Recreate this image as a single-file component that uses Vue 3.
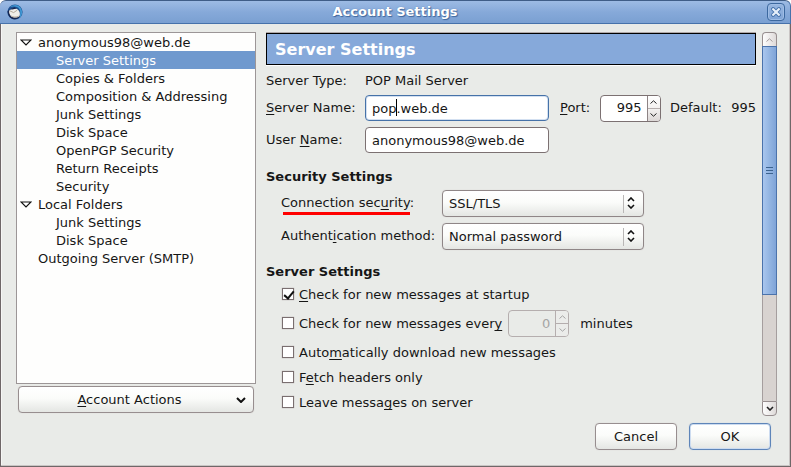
<script setup>
import { ref } from 'vue'

const tree = [
  {
    label: 'anonymous98@web.de',
    children: [
      'Server Settings',
      'Copies & Folders',
      'Composition & Addressing',
      'Junk Settings',
      'Disk Space',
      'OpenPGP Security',
      'Return Receipts',
      'Security'
    ]
  },
  { label: 'Local Folders', children: ['Junk Settings', 'Disk Space'] },
  { label: 'Outgoing Server (SMTP)', children: [] }
]
const selected = ref('0-0')

const serverName = ref('pop.web.de')
const userName = ref('anonymous98@web.de')
const port = ref(995)
const security = ref('SSL/TLS')
const auth = ref('Normal password')
const interval = ref(0)
const atStartup = ref(true)
const periodic = ref(false)
const autoDownload = ref(false)
const headersOnly = ref(false)
const leaveOnServer = ref(false)
</script>

<template>
  <div class="window">
    <header class="titlebar">
      <svg class="app-icon" viewBox="0 0 16 16" width="16" height="16" aria-hidden="true">
        <circle cx="8" cy="8" r="7.6" fill="#1d4f8f" />
        <path d="M3 3.2 C5.5 .4 11 0 13.5 3.5 C16 7 15.5 12 12 14.5 C13.6 11 14 6 11 3.6 C8 2 5 2.6 3 3.2Z" fill="#3f97d3" />
        <path d="M.6 7 C.6 11 3 14.6 7 15.3 C10 15.6 12.4 14 13 12 L5 12 L2 6Z" fill="#16254f" />
        <path d="M2.2 6.8 C4 4.6 7.6 3.6 10 5 C12.8 6.8 13.6 10.2 12.2 12.4 C10 14 5.6 13.8 3.8 12 C2.6 10.6 1.8 8.6 2.2 6.8Z" fill="#efede8" />
        <path d="M2.8 6.8 L6.6 8.6 L10.2 6.2 M4 12 C6 13.4 9.6 13.4 11.8 12.2" fill="none" stroke="#b5ab9c" stroke-width="1" />
        <path d="M3 5.2 L7.6 3.2 L9.6 4.6 L5.4 5.6Z" fill="#16254f" />
      </svg>
      <h1 class="title">Account Settings</h1>
      <button class="close" type="button" aria-label="Close">
        <svg viewBox="0 0 10 10" width="10" height="10" aria-hidden="true">
          <path d="M2.2 2.2 L7.8 7.8 M7.8 2.2 L2.2 7.8" stroke="#4672ab" stroke-width="4" stroke-linecap="square" />
          <path d="M2.2 2.2 L7.8 7.8 M7.8 2.2 L2.2 7.8" stroke="#e6effa" stroke-width="2.2" stroke-linecap="square" />
        </svg>
      </button>
    </header>

    <div class="body">
      <div class="columns">
        <aside class="sidebar">
          <ul class="tree" role="tree">
            <li v-for="(node, i) in tree" :key="i" role="treeitem">
              <div class="row branch">
                <span class="twisty">
                  <svg v-if="node.children.length" viewBox="0 0 12 7" width="12" height="7" aria-hidden="true">
                    <path d="M1 1 H11 L6 6Z" fill="#fff" stroke="#111" stroke-width="1.2" />
                  </svg>
                </span>
                {{ node.label }}
              </div>
              <ul v-if="node.children.length" role="group">
                <li
                  v-for="(child, j) in node.children"
                  :key="j"
                  class="row leaf"
                  :class="{ selected: selected === i + '-' + j }"
                  role="treeitem"
                  @click="selected = i + '-' + j"
                >{{ child }}</li>
              </ul>
            </li>
          </ul>
          <button class="btn actions" type="button">
            <span class="actions-label"><u>A</u>ccount Actions</span>
            <svg viewBox="0 0 10 6" width="10" height="6" aria-hidden="true">
              <path d="M1 1 L5 5 L9 1" fill="none" stroke="#111" stroke-width="2" />
            </svg>
          </button>
        </aside>

        <main class="pane">
          <h2 class="banner">Server Settings</h2>

          <div class="server">
            <div class="line type">
              <span class="name">Server Type:</span>
              <span>POP Mail Server</span>
            </div>
            <div class="line">
              <label class="name" for="server"><u>S</u>erver Name:</label>
              <span class="field">
                <input id="server" v-model="serverName" class="text active" type="text" />
                <span class="caret"></span>
              </span>
              <div class="port">
                <label for="port"><u>P</u>ort:</label>
                <span class="spin">
                  <input id="port" v-model="port" type="text" inputmode="numeric" />
                  <span class="steps">
                    <button type="button" aria-label="Increase port" @click="port++">
                      <svg viewBox="0 0 7 4" width="7" height="4"><path d="M.5 3.5 L3.5 .8 L6.5 3.5" /></svg>
                    </button>
                    <button type="button" aria-label="Decrease port" @click="port--">
                      <svg viewBox="0 0 7 4" width="7" height="4"><path d="M.5 .5 L3.5 3.2 L6.5 .5" /></svg>
                    </button>
                  </span>
                </span>
                <span>Default:</span>
                <span>995</span>
              </div>
            </div>
            <div class="line">
              <label class="name" for="user">User <u>N</u>ame:</label>
              <span class="field">
                <input id="user" v-model="userName" class="text" type="text" />
              </span>
            </div>
          </div>

          <h3>Security Settings</h3>
          <div class="group">
            <div class="line">
              <label class="choice marked" for="security">Connection sec<u>u</u>rity:</label>
              <span class="select">
                <select id="security" v-model="security">
                  <option>SSL/TLS</option>
                </select>
                <svg viewBox="0 0 8 12" width="8" height="12" aria-hidden="true">
                  <path d="M1 4 L4 1 L7 4 M1 8 L4 11 L7 8" />
                </svg>
              </span>
            </div>
            <div class="line">
              <label class="choice" for="auth">Authent<u>i</u>cation method:</label>
              <span class="select">
                <select id="auth" v-model="auth">
                  <option>Normal password</option>
                </select>
                <svg viewBox="0 0 8 12" width="8" height="12" aria-hidden="true">
                  <path d="M1 4 L4 1 L7 4 M1 8 L4 11 L7 8" />
                </svg>
              </span>
            </div>
          </div>

          <h3>Server Settings</h3>
          <div class="group">
            <label class="check"><input v-model="atStartup" type="checkbox" /><span><u>C</u>heck for new messages at startup</span></label>
            <div class="line every">
              <label class="check"><input v-model="periodic" type="checkbox" /><span>Check for new messages ever<u>y</u></span></label>
              <span class="spin off">
                <input v-model="interval" type="text" aria-label="Minutes between checks" disabled />
                <span class="steps">
                  <button type="button" aria-label="Increase minutes" disabled>
                    <svg viewBox="0 0 7 4" width="7" height="4"><path d="M.5 3.5 L3.5 .8 L6.5 3.5" /></svg>
                  </button>
                  <button type="button" aria-label="Decrease minutes" disabled>
                    <svg viewBox="0 0 7 4" width="7" height="4"><path d="M.5 .5 L3.5 3.2 L6.5 .5" /></svg>
                  </button>
                </span>
              </span>
              <span class="unit">minutes</span>
            </div>
            <label class="check"><input v-model="autoDownload" type="checkbox" /><span>Auto<u>m</u>atically download new messages</span></label>
            <label class="check"><input v-model="headersOnly" type="checkbox" /><span>F<u>e</u>tch headers only</span></label>
            <label class="check"><input v-model="leaveOnServer" type="checkbox" /><span>Leave messa<u>g</u>es on server</span></label>
          </div>
        </main>

        <div class="scrollbar">
          <button class="arrow up" type="button" aria-label="Scroll up" disabled>
            <svg viewBox="0 0 7 4" width="7" height="4"><path d="M.5 3.5 L3.5 .8 L6.5 3.5" /></svg>
          </button>
          <div class="track">
            <div class="thumb"><i></i><i></i><i></i></div>
          </div>
          <button class="arrow down" type="button" aria-label="Scroll down">
            <svg viewBox="0 0 8 5" width="8" height="5"><path d="M1 1 L4 4 L7 1" /></svg>
          </button>
        </div>
      </div>

      <footer class="footer">
        <button class="btn" type="button">Cancel</button>
        <button class="btn default" type="button">OK</button>
      </footer>
    </div>
  </div>
</template>

<style>
body {
  background: #fff;
}
</style>

<style scoped>
.window,
.window * {
  box-sizing: border-box;
}
.window {
  display: flex;
  flex-direction: column;
  min-height: 100vh;
  font: 13px/18px "DejaVu Sans", sans-serif;
  color: #161616;
}
button,
input,
select {
  font: inherit;
  color: inherit;
  margin: 0;
}
u {
  text-underline-offset: 2px;
  text-decoration-thickness: 1px;
  text-decoration-skip-ink: none;
}
h1,
h2,
h3,
ul {
  margin: 0;
  padding: 0;
  list-style: none;
}

/* Title bar */
.titlebar {
  display: flex;
  align-items: center;
  height: 24px;
  padding: 0 5px 0 7px;
  border: 1px solid #4672ab;
  border-top-color: #3f5d87;
  border-width: 1px 1px 1px 0;
  border-radius: 6px 6px 0 0;
  background: linear-gradient(#9dbbe4, #86a9d9 50%, #7aa0d2);
}
.app-icon {
  flex: none;
}
.title {
  flex: 1;
  font-size: 13px;
  line-height: 18px;
  text-align: center;
  color: #fff;
  text-shadow: 1px 1px 1px #3e669c, 0 0 1px #4a74ac;
}
.close {
  display: flex;
  align-items: center;
  justify-content: center;
  width: 18px;
  height: 18px;
  padding: 0;
  border: 1px solid #3c689f;
  border-radius: 4px;
  background: linear-gradient(#97b6e0, #7fa4d6);
  box-shadow: inset 0 0 0 1px #9fbde5;
}

/* Window body */
.body {
  flex: 1;
  display: flex;
  flex-direction: column;
  padding: 8px 13px 16px 15px;
  background: #e9ebe8;
  border: 1px solid #6f6768;
  border-top: 0;
  box-shadow: inset -1px -1px #c9c5c4, inset 1px 0 #f6f6f5;
}
.columns {
  flex: 1;
  display: flex;
}
.sidebar {
  flex: none;
  display: flex;
  flex-direction: column;
  gap: 2px;
  width: 240px;
  padding-bottom: 3px;
}
.tree {
  flex: 1;
  background: #fefefd;
  border: 1px solid #9c9697;
}
.row {
  height: 18px;
  line-height: 20px;
}
.branch {
  display: flex;
}
.twisty {
  display: flex;
  align-items: center;
  width: 21px;
  padding-left: 3px;
}
.leaf {
  padding-left: 39px;
}
.selected {
  background: #6f99ce;
  color: #fff;
}

/* Buttons */
.btn {
  width: 82px;
  height: 27px;
  padding: 0;
  border: 1px solid #978e8f;
  border-radius: 4px;
  background: linear-gradient(#fff, #fbfcfa 45%, #e4e6e3);
  box-shadow: 0 0 1px #c9c3c3;
}
.default {
  border-color: #5e85b9;
  box-shadow: inset 0 0 0 1px #cddcf0, 0 0 1px #a9bedb;
}
.actions {
  display: flex;
  align-items: center;
  width: auto;
  margin: 0 2px;
  padding: 0 7px 0 4px;
}
.actions-label {
  flex: 1;
}

/* Settings pane */
.pane {
  flex: 1;
  min-width: 0;
  padding-left: 10px;
}
.banner {
  height: 32px;
  margin-top: 1px;
  padding-left: 8px;
  border: 1px solid #000;
  background: #86a9da;
  box-shadow: 0 -1px #b0a9a9, 0 1px #fff;
  color: #fff;
  font-size: 16px;
  line-height: 32px;
}
.server {
  display: flex;
  flex-direction: column;
  gap: 4px;
  padding-top: 7px;
}
.line {
  display: flex;
  align-items: center;
}
.server .line {
  height: 28px;
}
.server .type {
  height: 18px;
}
.name {
  flex: none;
  width: 99px;
}
.field {
  position: relative;
  display: flex;
  width: 184px;
}
.text {
  width: 100%;
  height: 26px;
  padding: 0 6px;
  border: 1px solid #7c7172;
  border-radius: 4px;
  background: #fff;
  outline: none;
}
.active {
  border-color: #4672a8;
  box-shadow: inset 0 0 0 1px #d3e0f1;
}
.caret {
  position: absolute;
  left: 31px;
  top: 4px;
  width: 1px;
  height: 17px;
  background: #000;
}
.port {
  flex: 1;
  display: flex;
  align-items: center;
  justify-content: space-between;
  padding-left: 11px;
  white-space: nowrap;
}
.spin {
  display: flex;
  width: 61px;
  height: 27px;
  border: 1px solid #7c7172;
  border-radius: 4px;
  background: #fff;
  overflow: hidden;
}
.spin input {
  flex: 1;
  min-width: 0;
  padding: 0 5px 0 0;
  border: 0;
  background: none;
  text-align: right;
  outline: none;
}
.steps {
  display: flex;
  flex-direction: column;
  width: 13px;
  border-left: 1px solid #8d8384;
}
.steps button {
  flex: 1;
  display: flex;
  align-items: center;
  justify-content: center;
  padding: 0;
  border: 0;
  background: linear-gradient(#fff, #f3f1f0);
}
.steps button + button {
  border-top: 1px solid #b4adad;
  background: linear-gradient(#f3f1f0, #dcd7d6);
}
.steps path,
.arrow path {
  fill: none;
  stroke: #222;
}
.off {
  border-color: #b5aeae;
  background: #e9ebe8;
  color: #a5a5a4;
}
.off .steps {
  border-color: #b5aeae;
}
.off .steps button {
  background: #ebecea;
}
.off path {
  stroke: #a5a5a4;
}
h3 {
  margin: 13px 0 4px;
  font-size: 13px;
  line-height: 18px;
}
.server + h3 {
  margin-top: 14px;
}
.group {
  display: flex;
  flex-direction: column;
  gap: 6px;
  padding-left: 15px;
}
.choice {
  width: 161px;
  padding-bottom: 2px;
}
.marked {
  position: relative;
}
.marked::after {
  content: "";
  position: absolute;
  left: 2px;
  bottom: -1px;
  width: 127px;
  height: 3px;
  background: #f00;
}
.select {
  position: relative;
  width: 202px;
}
.select select {
  display: block;
  width: 100%;
  height: 27px;
  padding: 0 28px 0 6px;
  appearance: none;
  border: 1px solid #8f8687;
  border-radius: 4px;
  background: linear-gradient(#fff, #fbfcfa 45%, #e4e6e3);
  box-shadow: 0 0 1px #c9c3c3;
}
.select::after {
  content: "";
  position: absolute;
  right: 20px;
  top: 5px;
  bottom: 4px;
  width: 1px;
  background: #b9b7b6;
}
.select svg {
  position: absolute;
  right: 9px;
  top: 7px;
  pointer-events: none;
}
.select path {
  fill: none;
  stroke: #111;
  stroke-width: 1.6;
}
.check {
  display: flex;
  align-items: center;
  height: 19px;
  gap: 5px;
}
.check input {
  position: relative;
  appearance: none;
  width: 12px;
  height: 12px;
  margin: 0 0 1px 1px;
  border: 1px solid #7a6f70;
  background: #fff;
  box-shadow: 0 0 1px #a59c9c;
}
.check input:checked::after {
  content: "";
  position: absolute;
  left: 3px;
  top: 0;
  width: 4px;
  height: 8px;
  border: solid #111;
  border-width: 0 2px 2px 0;
  transform: rotate(40deg);
}
.every {
  gap: 6px;
}
.unit {
  padding-left: 5px;
}

/* Scroll bar */
.scrollbar {
  flex: none;
  display: flex;
  flex-direction: column;
  width: 15px;
  margin-left: 6px;
}
.arrow {
  display: flex;
  align-items: center;
  justify-content: center;
  height: 15px;
  padding: 0;
  border: 1px solid #978e8f;
  background: linear-gradient(90deg, #fdfdfd, #dedad9);
}
.up {
  height: 14px;
  border-bottom: 0;
  border-radius: 4px 4px 0 0;
}
.up path {
  stroke: #a39c9c;
}
.down {
  border-radius: 0 0 4px 4px;
}
.down path {
  stroke-width: 1.6;
}
.track {
  flex: 1;
  border: solid #a59e9e;
  border-width: 0 1px;
  background: #d8d3d0;
}
.thumb {
  display: flex;
  flex-direction: column;
  align-items: center;
  justify-content: center;
  gap: 2px;
  height: 70%;
  margin: 0 -1px;
  border: 1px solid #4b73ab;
  background: linear-gradient(90deg, #a9c6ee, #93b5e2 50%, #7fa4d8);
}
.thumb i {
  width: 7px;
  height: 1px;
  background: #3c638f;
}

.footer {
  display: flex;
  justify-content: flex-end;
  gap: 12px;
  padding: 7px 6px 0 0;
}
</style>
